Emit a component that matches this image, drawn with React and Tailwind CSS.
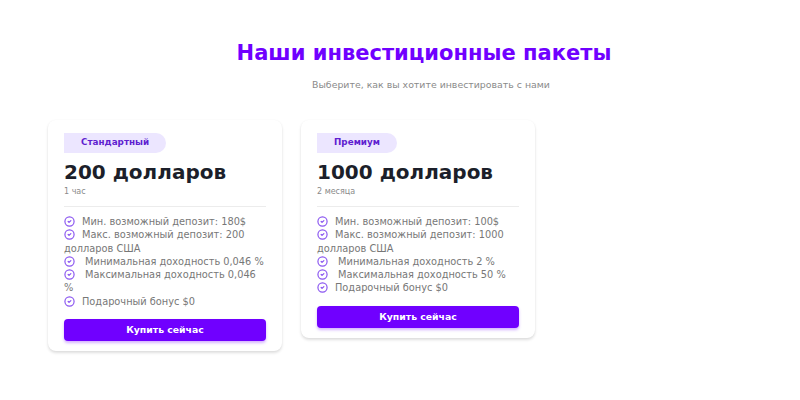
import React from "react";
import { CircleCheck } from "lucide-react";

const PACKS = [
  {
    tag: "Стандартный",
    price: "200 долларов",
    term: "1 час",
    items: [
      "Мин. возможный депозит: 180$",
      "Макс. возможный депозит: 200 долларов США",
      " Минимальная доходность 0,046 %",
      " Максимальная доходность 0,046 %",
      "Подарочный бонус $0",
    ],
  },
  {
    tag: "Премиум",
    price: "1000 долларов",
    term: "2 месяца",
    items: [
      "Мин. возможный депозит: 100$",
      "Макс. возможный депозит: 1000 долларов США",
      " Минимальная доходность 2 %",
      " Максимальная доходность 50 %",
      "Подарочный бонус $0",
    ],
  },
];

function Card({ p }) {
  return (
    <div className="bg-white rounded-lg shadow-[0_2px_3px_rgba(0,0,0,0.13),0_0_2px_rgba(0,0,0,0.04)] px-4 pt-[13px] pb-[10px]">
      <div className="flex">
        <span className="flex items-center h-[20px] bg-[#ece6ff] text-[#5f1fd0] text-[8.8px] font-semibold pl-[17px] pr-[17px] rounded-tl-md rounded-r-full">
          {p.tag}
        </span>
      </div>
      <h3 className="mt-[7px] text-[20px] font-bold text-[#1c1f2a] leading-6">{p.price}</h3>
      <p className="mt-[2px] text-[8px] text-[#8a8a8a] leading-3">{p.term}</p>
      <div className="border-t border-[#ececec] mt-[8px] mb-[8px]" />
      <ul className="text-[9.8px] text-[#777] leading-[13.3px]">
        {p.items.map((t, i) => (
          <li key={i} className="whitespace-pre-wrap">
            <CircleCheck size={11} strokeWidth={2.6} className="inline-block align-[-2px] text-[#8a55f0] mr-[7px]" />
            {t}
          </li>
        ))}
      </ul>
      <button className="mt-[11px] w-full h-[22px] rounded bg-[#7000ff] text-white text-[9.3px] font-bold shadow-[0_2px_3px_rgba(112,0,255,0.3)]">
        Купить сейчас
      </button>
    </div>
  );
}

export default function App() {
  return (
    <div className="w-[800px] h-[400px] bg-white pl-12" style={{ fontFamily: '"DejaVu Sans", sans-serif' }}>
      <div className="text-center pt-[41px]">
        <h2 className="text-[21px] font-bold text-[#7000ff] leading-6">Наши инвестиционные пакеты</h2>
        <p className="mt-[13px] text-[9.4px] leading-[14px] text-[#8a8a8a] pl-[14px]">Выберите, как вы хотите инвестировать с нами</p>
      </div>
      <div className="grid grid-cols-[234px_234px_234px] gap-[19px] mt-[28px] items-start">
        {PACKS.map((p) => (
          <Card key={p.tag} p={p} />
        ))}
      </div>
    </div>
  );
}
